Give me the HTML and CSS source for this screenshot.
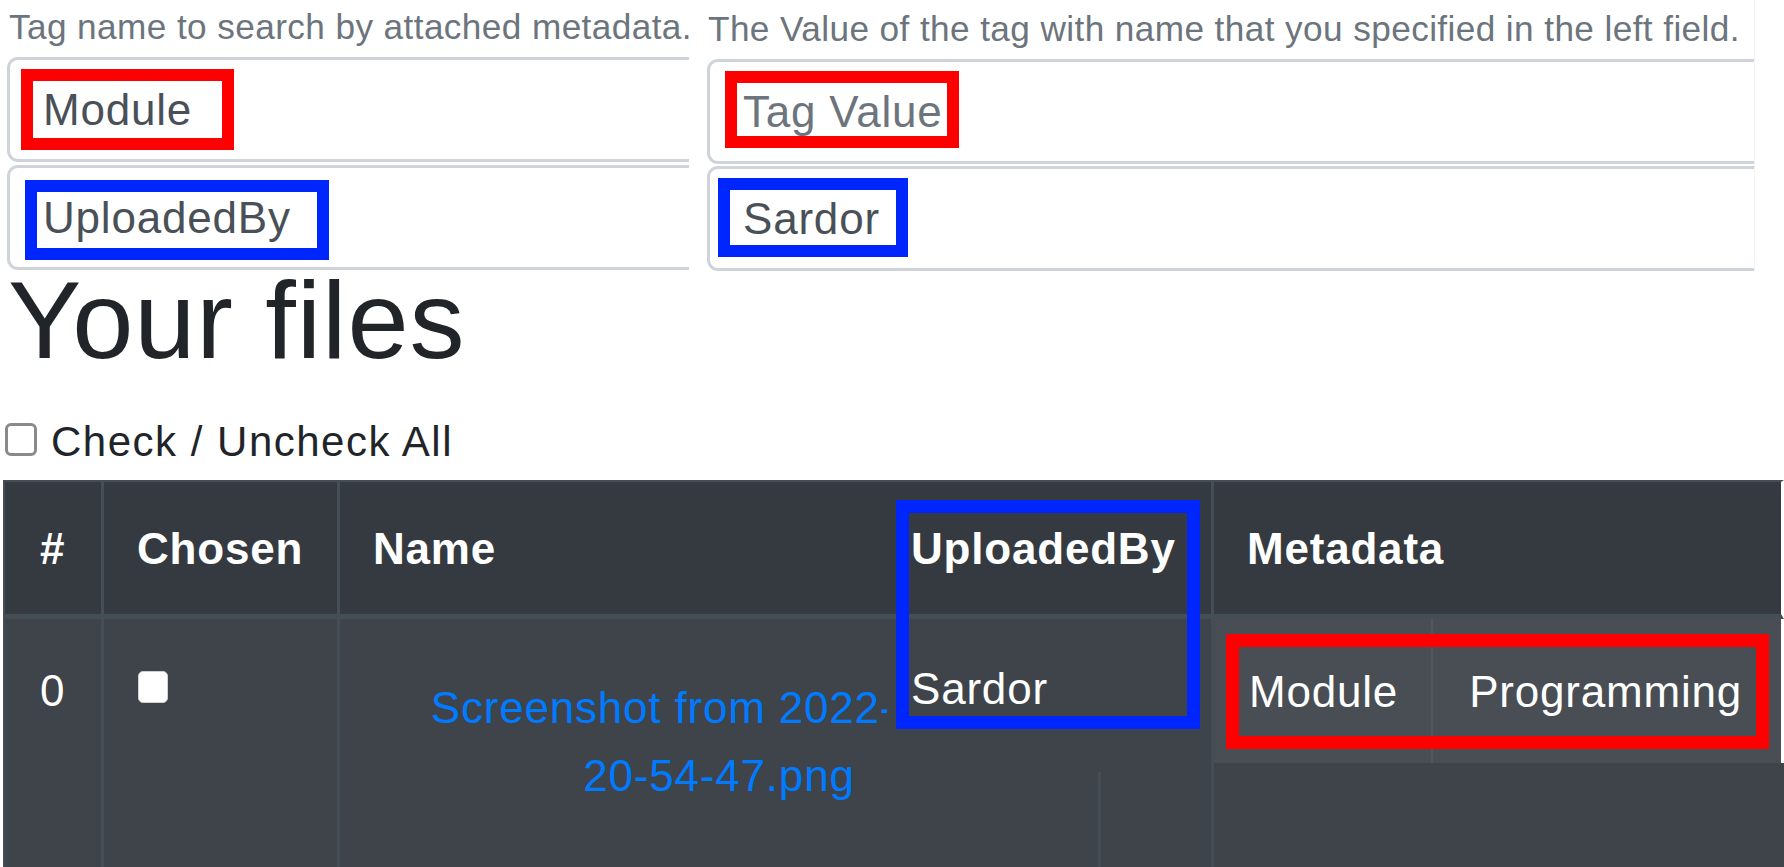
FILE: index.html
```html
<!DOCTYPE html>
<html lang="en">
<head>
<meta charset="utf-8">
<title>Your files</title>
<link rel="stylesheet" href="styles.css">
</head>
<body>
<form class="search">
  <div class="col col-name">
    <small class="hint">Tag name to search by attached metadata.</small>
    <div class="field">
      <input class="control" type="text" value="Module">
      <span class="mark mark-red mark-1"></span>
    </div>
    <div class="field field-next">
      <input class="control" type="text" value="UploadedBy">
      <span class="mark mark-blue mark-2"></span>
    </div>
  </div>
  <div class="col col-value">
    <small class="hint">The Value of the tag with name that you specified in the left field.</small>
    <div class="field">
      <input class="control" type="text" placeholder="Tag Value">
      <span class="mark mark-red mark-3"></span>
    </div>
    <div class="field field-next">
      <input class="control" type="text" value="Sardor">
      <span class="mark mark-blue mark-4"></span>
    </div>
  </div>
</form>

<h1 class="title">Your files</h1>

<label class="check-all"><input class="check-box" type="checkbox">Check / Uncheck All</label>

<div class="table-wrap">
  <table class="files">
    <colgroup>
      <col class="c-num">
      <col class="c-chosen">
      <col class="c-name">
      <col class="c-blank">
      <col class="c-meta">
    </colgroup>
    <thead>
      <tr>
        <th class="head">#</th>
        <th class="head">Chosen</th>
        <th class="head">Name</th>
        <th class="head"></th>
        <th class="head head-last">Metadata</th>
      </tr>
    </thead>
    <tbody>
      <tr class="file-row">
        <td class="cell">0</td>
        <td class="cell"><input class="row-check" type="checkbox"></td>
        <td class="cell cell-name"><a class="file-link" href="#"><span class="line-cut">Screenshot from 2022-</span><br>20-54-47.png</a></td>
        <td class="cell"></td>
        <td class="cell cell-meta">
          <div class="meta-wrap">
            <table class="meta-table">
              <tr>
                <td class="meta-key">Module</td>
                <td class="meta-val">Programming</td>
              </tr>
            </table>
            <span class="mark mark-red mark-5"></span>
          </div>
        </td>
      </tr>
    </tbody>
  </table>

  <div class="patch">
    <div class="patch-head">UploadedBy</div>
    <div class="patch-body">Sardor</div>
  </div>
  <span class="mark mark-blue mark-6"></span>
</div>
</body>
</html>
```

FILE: styles.css
```css
* {
  box-sizing: border-box;
}

html,
body {
  margin: 0;
  padding: 0;
  background: #fff;
  overflow: hidden;
}

body {
  width: 1784px;
  height: 867px;
  font-family: "Liberation Sans", Arial, sans-serif;
  color: #212529;
}

/* ---------- search form ---------- */
.search {
  display: flex;
  align-items: flex-start;
  padding-left: 7px;
}

.col-name {
  width: 682px;
}

.col-value {
  width: 1048px;
  margin-left: 18px;
  border-right: 1px solid #f3f3f3;
}

.hint {
  display: block;
  font-size: 35.2px;
  line-height: 52px;
  letter-spacing: 0.4px;
  color: #6c757d;
  white-space: nowrap;
  margin-bottom: 4px;
}

.col-name .hint {
  padding: 1px 0 0 2px;
}

.col-value .hint {
  padding: 3px 0 0 1px;
}

.field {
  position: relative;
  height: 105px;
}

.col-name .field-next {
  margin-top: 3px;
}

.col-value .field-next {
  margin-top: 2px;
}

.control {
  display: block;
  width: 100%;
  height: 105px;
  margin: 0;
  padding: 0 33px;
  font-family: "Liberation Sans", Arial, sans-serif;
  font-size: 44px;
  letter-spacing: 0.8px;
  color: #495057;
  background: #fff;
  border: 3px solid #ced4da;
  border-right: 0;
  border-radius: 11px 0 0 11px;
  outline: none;
}

.control::placeholder {
  color: #6c757d;
  opacity: 1;
}

/* annotation rectangles */
.mark {
  position: absolute;
  display: block;
  border: 12px solid;
  pointer-events: none;
}

.mark-red {
  border-color: #ff0000;
}

.mark-blue {
  border-color: #0026ff;
}

.mark-1 { left: 14px; top: 12px; width: 213px; height: 81px; }
.mark-2 { left: 18px; top: 15px; width: 304px; height: 80px; }
.mark-3 { left: 18px; top: 12px; width: 234px; height: 77px; }
.mark-4 { left: 11px; top: 12px; width: 190px; height: 79px; }
.mark-5 { left: 12px; top: 15px; width: 543px; height: 115px; border-width: 13px; }
.mark-6 { left: 893px; top: 20px; width: 304px; height: 229px; border-width: 13px; }

/* ---------- heading ---------- */
.title {
  margin: 0;
  padding-left: 8px;
  font-size: 110px;
  line-height: 98px;
  letter-spacing: 0.9px;
  font-weight: 400;
  color: #212529;
}

.check-all {
  display: flex;
  align-items: flex-start;
  margin-top: 42px;
  padding-left: 5px;
  font-size: 42px;
  line-height: 61.5px;
  letter-spacing: 1.5px;
  color: #212529;
}

.check-box {
  appearance: none;
  -webkit-appearance: none;
  flex: none;
  width: 32px;
  height: 33px;
  margin: 12px 14px 0 0;
  background: #fff;
  border: 3px solid #8a8a8a;
  border-radius: 6px;
}

/* ---------- table ---------- */
.table-wrap {
  position: relative;
  margin-top: 7.5px;
  margin-left: 3px;
  width: 1781px;
}

.files {
  width: 1781px;
  table-layout: fixed;
  border-spacing: 0;
  background: #3e444a;
  color: #fff;
  font-size: 44px;
  line-height: 66px;
  letter-spacing: 0.8px;
}

.c-num { width: 98px; }
.c-chosen { width: 236px; }
.c-name { width: 761px; }
.c-blank { width: 113px; }
.c-meta { width: 573px; }

.head {
  padding: 34px 33px 32px;
  background: #343a40;
  font-weight: 700;
  text-align: left;
  vertical-align: bottom;
  white-space: nowrap;
  border-top: 2px solid #454d55;
  border-bottom: 5px solid #454d55;
  border-left: 3px solid #454d55;
}

.head:first-child,
.cell:first-child {
  border-left-width: 2px;
  padding-left: 35px;
}

.head-last {
  border-right: 3px solid #fff;
}

.file-row {
  height: 248px;
}

.cell {
  padding: 39px 33px 33px;
  vertical-align: top;
  border-left: 3px solid #454d55;
}

.row-check {
  appearance: none;
  -webkit-appearance: none;
  display: block;
  width: 30px;
  height: 32px;
  margin: 13px 0 0 1px;
  background: #fff;
  border: 1px solid #d0d0d0;
  border-radius: 5px;
}

.cell-name {
  text-align: center;
  vertical-align: middle;
  padding-bottom: 42px;
  line-height: 68px;
}

.file-link {
  color: #007bff;
  text-decoration: none;
}

.line-cut {
  white-space: nowrap;
  padding-right: 112px;
}

.cell-meta {
  padding: 0;
}

.meta-wrap {
  position: relative;
}

.meta-table {
  width: 100%;
  height: 144px;
  border-spacing: 0;
  background: #484e54;
  border-right: 3px solid #fff;
  color: #fff;
  font-size: 44px;
  line-height: 66px;
  letter-spacing: 0.8px;
}

.meta-key,
.meta-val {
  padding: 2px 33px 0 36px;
  vertical-align: middle;
  white-space: nowrap;
}

.meta-key {
  width: 218px;
  padding-left: 35px;
  border-right: 2px solid #50575d;
}

/* pasted "UploadedBy" column lying over the table */
.patch {
  position: absolute;
  left: 884px;
  top: 0;
  width: 324px;
  color: #fff;
  font-size: 44px;
  line-height: 66px;
  letter-spacing: 0.8px;
}

.patch-head {
  height: 139px;
  padding: 34px 0 0 24px;
  background: #343a40;
  border-top: 2px solid #454d55;
  border-bottom: 5px solid #454d55;
  font-weight: 700;
}

.patch-body {
  height: 153px;
  padding: 37px 0 0 24px;
  background: #3e444a;
}
```
